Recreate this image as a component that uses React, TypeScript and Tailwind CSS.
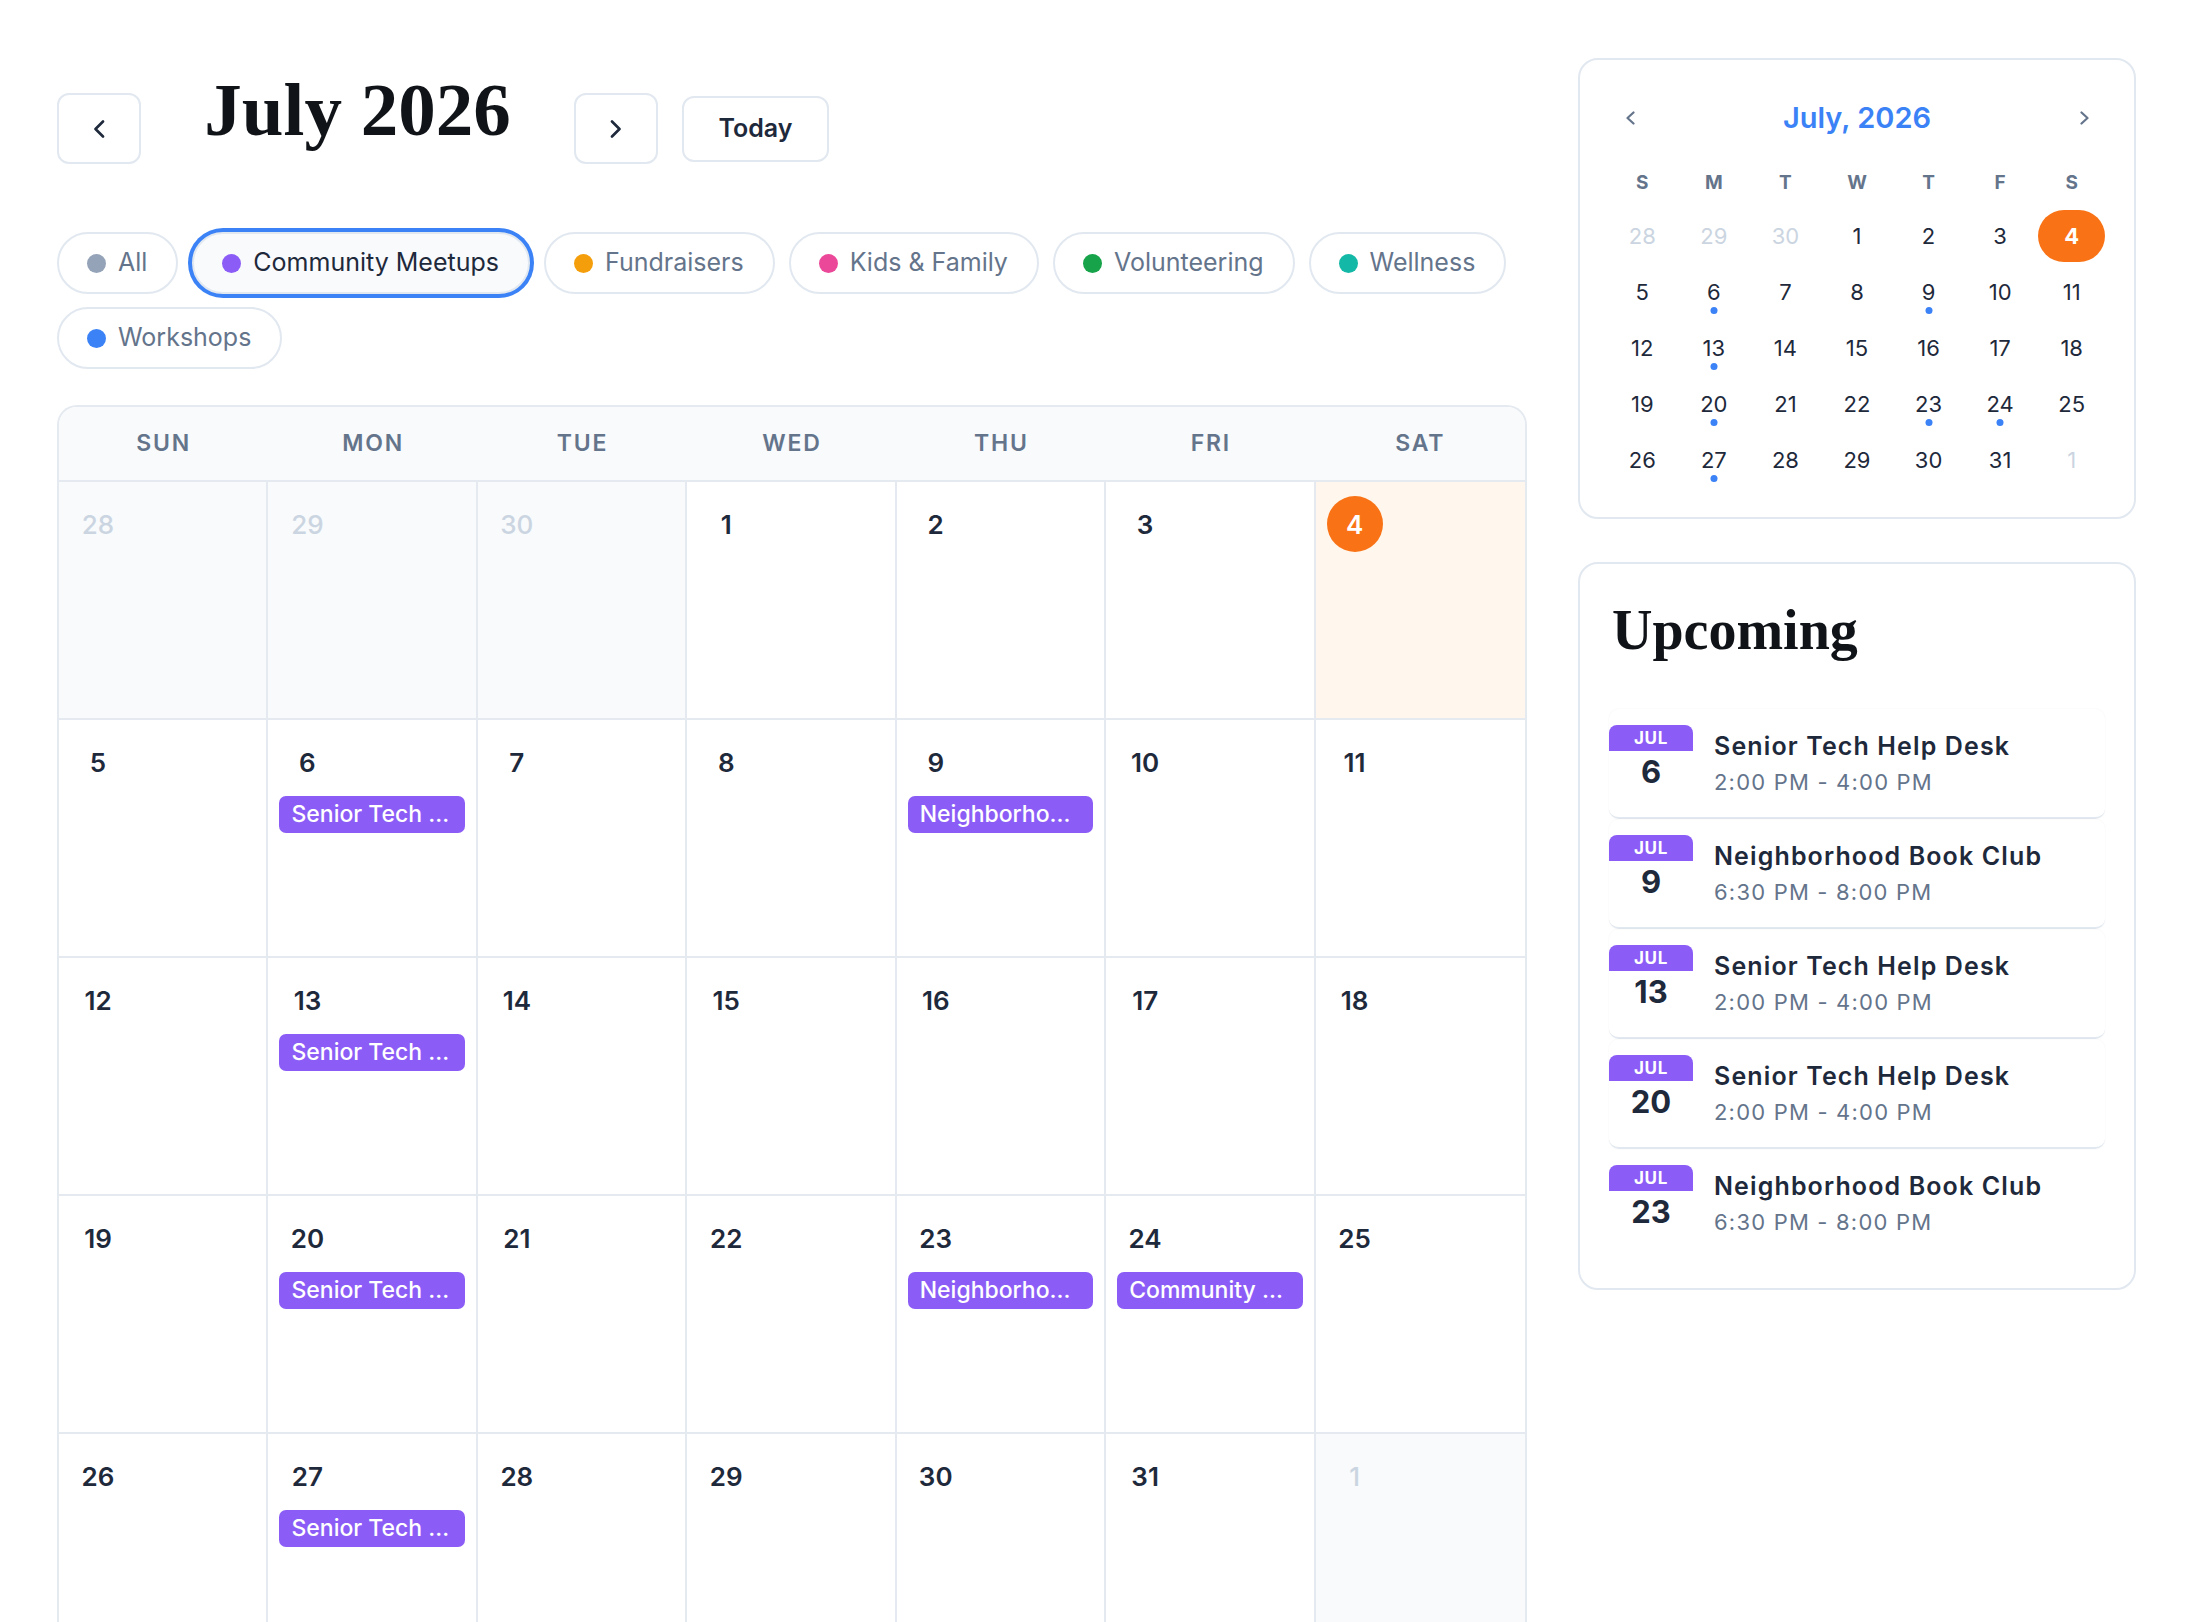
import React from "react";

type Cell = { d: number; out?: boolean; today?: boolean; ev?: string };

const S = "Senior Tech Help Desk";
const N = "Neighborhood Book Club";

const weeks: Cell[][] = [
  [{ d: 28, out: true }, { d: 29, out: true }, { d: 30, out: true }, { d: 1 }, { d: 2 }, { d: 3 }, { d: 4, today: true }],
  [{ d: 5 }, { d: 6, ev: S }, { d: 7 }, { d: 8 }, { d: 9, ev: N }, { d: 10 }, { d: 11 }],
  [{ d: 12 }, { d: 13, ev: S }, { d: 14 }, { d: 15 }, { d: 16 }, { d: 17 }, { d: 18 }],
  [{ d: 19 }, { d: 20, ev: S }, { d: 21 }, { d: 22 }, { d: 23, ev: N }, { d: 24, ev: "Community Garden Day" }, { d: 25 }],
  [{ d: 26 }, { d: 27, ev: S }, { d: 28 }, { d: 29 }, { d: 30 }, { d: 31 }, { d: 1, out: true }],
];

const dotDays = [6, 9, 13, 20, 23, 24, 27];

const chips = [
  { label: "All", dot: "bg-[#94a3b8]" },
  { label: "Community Meetups", dot: "bg-[#8b5cf6]", active: true },
  { label: "Fundraisers", dot: "bg-[#f59e0b]" },
  { label: "Kids & Family", dot: "bg-[#ec4899]" },
  { label: "Volunteering", dot: "bg-[#16a34a]" },
  { label: "Wellness", dot: "bg-[#14b8a6]" },
  { label: "Workshops", dot: "bg-[#3b82f6]" },
];

const upcoming = [
  { day: 6, title: S, time: "2:00 PM - 4:00 PM" },
  { day: 9, title: N, time: "6:30 PM - 8:00 PM" },
  { day: 13, title: S, time: "2:00 PM - 4:00 PM" },
  { day: 20, title: S, time: "2:00 PM - 4:00 PM" },
  { day: 23, title: N, time: "6:30 PM - 8:00 PM" },
];

function BigChevron({ dir }: { dir: "l" | "r" }) {
  return (
    <svg width="12" height="18" viewBox="0 0 12 18" fill="none">
      <polyline
        points={dir === "l" ? "10,1.5 2.5,9 10,16.5" : "2,1.5 9.5,9 2,16.5"}
        stroke="#1e293b"
        strokeWidth="2.6"
        strokeLinecap="round"
        strokeLinejoin="round"
      />
    </svg>
  );
}

function SmallChevron({ dir }: { dir: "l" | "r" }) {
  return (
    <svg width="11" height="14" viewBox="0 0 11 14" fill="none">
      <polyline
        points={dir === "l" ? "8.5,1.5 2.5,7 8.5,12.5" : "2.5,1.5 8.5,7 2.5,12.5"}
        stroke="#64748b"
        strokeWidth="2.2"
        strokeLinecap="round"
        strokeLinejoin="round"
      />
    </svg>
  );
}

export default function App() {
  return (
    <div className="h-screen overflow-hidden bg-white font-['Inter',sans-serif] text-[#1e293b]">
      <div className="flex pl-[57px] pt-[57px] gap-[51px]">
        <main className="w-[1470px] shrink-0">
          {/* Header */}
          <div className="flex items-start">
            <button className="mt-[36px] w-[84px] h-[71px] rounded-[12px] border-2 border-[#e2e8f0] bg-white flex items-center justify-center">
              <BigChevron dir="l" />
            </button>
            <h1 className="ml-[14px] w-[405px] mt-[15px] text-center font-['Liberation_Serif',serif] font-bold text-[75px] leading-[75px] text-[#101418]">
              July 2026
            </h1>
            <button className="ml-[14px] mt-[36px] w-[84px] h-[71px] rounded-[12px] border-2 border-[#e2e8f0] bg-white flex items-center justify-center">
              <BigChevron dir="r" />
            </button>
            <button className="ml-[24px] mt-[39px] w-[147px] h-[66px] rounded-[12px] border-2 border-[#e2e8f0] bg-white text-[25px] font-semibold text-[#1e293b]">
              Today
            </button>
          </div>

          {/* Chips */}
          <div className="mt-[68px] flex flex-wrap gap-x-[14px] gap-y-[13px] w-[1470px]">
            {chips.map((c) => (
              <div
                key={c.label}
                className={
                  "h-[62px] pl-[28px] pr-[29px] rounded-full border-2 border-[#e2e8f0] flex items-center gap-[12px] text-[25px] " +
                  (c.active ? "bg-[#f8fafc] text-[#1e293b] ring-4 ring-[#3b82f6]" : "bg-white text-[#64748b]")
                }
              >
                <span className={"w-[19px] h-[19px] rounded-full " + c.dot} />
                <span>{c.label}</span>
              </div>
            ))}
          </div>

          {/* Grid */}
          <div className="mt-[36px] w-[1470px] border-t-2 border-x-2 border-[#e5e9f0] rounded-t-[20px] overflow-hidden">
            <div className="grid grid-cols-7 h-[75px] bg-[#f8fafc] border-b-2 border-[#e5e9f0]">
              {["SUN", "MON", "TUE", "WED", "THU", "FRI", "SAT"].map((d) => (
                <div key={d} className="flex items-center justify-center text-[23px] font-semibold tracking-[0.08em] text-[#64748b]">
                  {d}
                </div>
              ))}
            </div>
            {weeks.map((w, wi) => (
              <div key={wi} className="grid grid-cols-7">
                {w.map((c, ci) => (
                  <div
                    key={ci}
                    className={
                      "h-[238px] border-b-2 border-[#e5e9f0] pl-[11px] pr-[11px] pt-[14px] " +
                      (ci < 6 ? "border-r-2 " : "") +
                      (c.out ? "bg-[#f8fafc]" : c.today ? "bg-[#fff7ed]" : "bg-white")
                    }
                  >
                    <div
                      className={
                        "w-[56px] h-[56px] rounded-full flex items-center justify-center text-[26px] " +
                        (c.today
                          ? "bg-[#f97316] text-white font-semibold"
                          : c.out
                          ? "text-[#cbd5e1] font-medium"
                          : "text-[#1e293b] font-semibold")
                      }
                    >
                      {c.d}
                    </div>
                    {c.ev && (
                      <div className="mt-[6px] h-[37px] rounded-[7px] bg-[#8b5cf6] text-white text-[23px] font-medium leading-[37px] px-[12px] truncate">
                        {c.ev}
                      </div>
                    )}
                  </div>
                ))}
              </div>
            ))}
          </div>
        </main>

        <aside className="w-[558px] shrink-0 flex flex-col gap-[43px] pt-[1px]">
          {/* Mini calendar */}
          <div className="rounded-[20px] border-2 border-[#e2e8f0] px-[29px] pt-[29px] pb-[31px]">
            <div className="h-[58px] flex items-center justify-between">
              <div className="w-[42px] h-[42px] flex items-center justify-center">
                <SmallChevron dir="l" />
              </div>
              <div className="text-[29px] font-semibold text-[#3b82f6]">July, 2026</div>
              <div className="w-[42px] h-[42px] flex items-center justify-center">
                <SmallChevron dir="r" />
              </div>
            </div>
            <div className="mt-[14px] grid grid-cols-7 gap-x-[5px] h-[44px]">
              {["S", "M", "T", "W", "T", "F", "S"].map((d, i) => (
                <div key={i} className="flex items-center justify-center text-[19px] font-bold text-[#64748b]">
                  {d}
                </div>
              ))}
            </div>
            <div className="mt-[5px] grid grid-cols-7 gap-x-[5px] gap-y-[4px]">
              {weeks.flat().map((c, i) => (
                <div
                  key={i}
                  className={
                    "relative h-[52px] rounded-full flex items-center justify-center text-[22px] " +
                    (c.today ? "bg-[#f97316] text-white font-bold" : c.out ? "text-[#cbd5e1]" : "text-[#1e293b]")
                  }
                >
                  {c.d}
                  {!c.out && dotDays.includes(c.d) && (
                    <span className="absolute bottom-[4px] left-1/2 -translate-x-1/2 w-[7px] h-[7px] rounded-full bg-[#3b82f6]" />
                  )}
                </div>
              ))}
            </div>
          </div>

          {/* Upcoming */}
          <div className="rounded-[20px] border-2 border-[#e2e8f0] px-[29px] pt-[31px] pb-[29px]">
            <h2 className="mt-[7px] font-['Liberation_Serif',serif] font-bold text-[56px] leading-[56px] text-[#101418] ml-[3px]">
              Upcoming
            </h2>
            <div className="mt-[51px] flex flex-col">
              {upcoming.map((u, i) => (
                <div
                  key={i}
                  className={
                    "h-[110px] rounded-[10px] flex items-start gap-[21px] pt-[16px] " +
                    (i < upcoming.length - 1 ? "border-b-2 border-[#e2e8f0] shadow-[0_0_2px_rgba(15,23,42,0.06)]" : "")
                  }
                >
                  <div className="w-[84px] shrink-0 flex flex-col items-center">
                    <div className="w-full h-[26px] rounded-t-[8px] bg-[#8b5cf6] text-white text-[17px] font-bold leading-[26px] text-center tracking-[0.04em]">
                      JUL
                    </div>
                    <div className="mt-[6px] text-[31px] font-bold leading-[30px] text-[#1e293b]">{u.day}</div>
                  </div>
                  <div className="pt-[6px]">
                    <div className="text-[25px] font-semibold leading-[30px] tracking-[0.045em] text-[#1e293b]">{u.title}</div>
                    <div className="mt-[7px] text-[22px] leading-[28px] tracking-[1.2px] text-[#64748b]">{u.time}</div>
                  </div>
                </div>
              ))}
            </div>
          </div>
        </aside>
      </div>
    </div>
  );
}
